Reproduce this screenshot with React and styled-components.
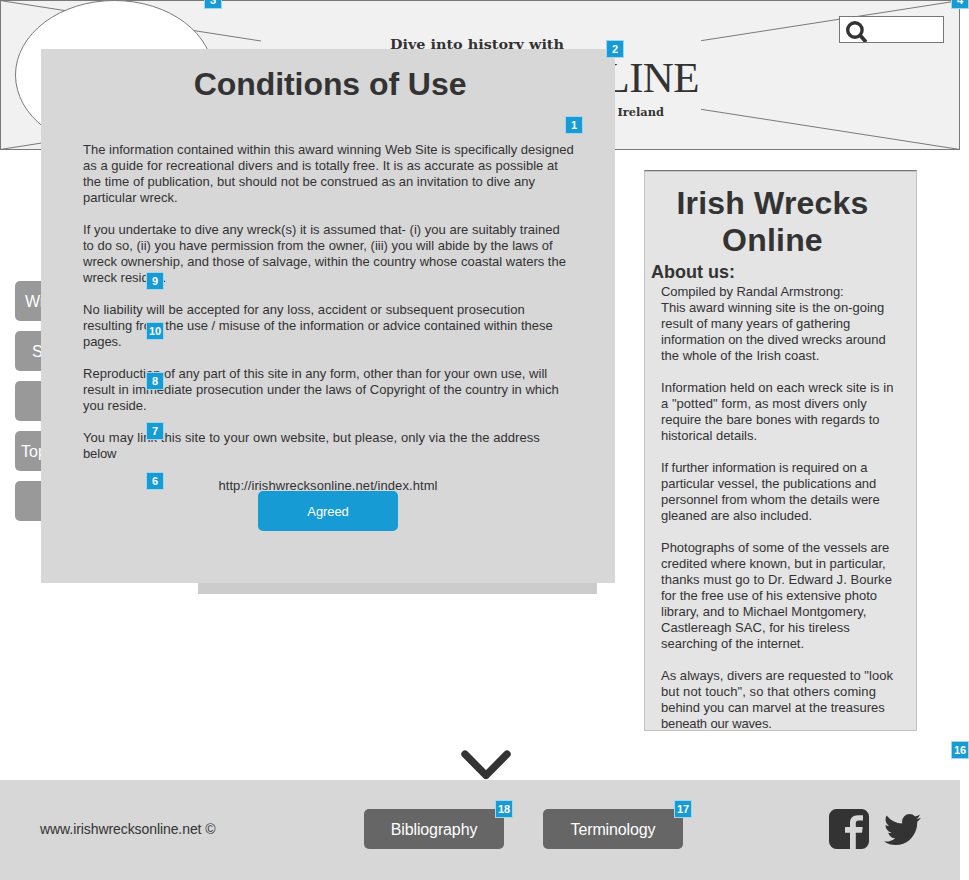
import React from "react";
import styled, { createGlobalStyle } from "styled-components";

const Global = createGlobalStyle`
  * { box-sizing: border-box; }
  body { margin: 0; background: #fff; color: #333; font-family: "Liberation Sans", Arial, sans-serif; font-size: 13px; }
  h1, h2, p { margin: 0; }
`;

const Page = styled.div`
  position: relative;
  width: 969px;
  height: 880px;
  overflow: hidden;
  display: flex;
  flex-direction: column;
`;

const Header = styled.header`
  position: relative;
  width: 960px;
  height: 150px;
  flex: none;
  display: grid;
  grid-template-columns: 261px 440px 1fr;
  background: #f1f1f1;
`;

const Backdrop = styled.svg`
  position: absolute;
  inset: 0;
`;

const Titles = styled.div`
  grid-column: 2;
  position: relative;
  margin: 1px 0;
  padding-top: 35px;
  background: #f1f1f1;
  display: flex;
  flex-direction: column;
  align-items: flex-end;
  white-space: nowrap;
`;

const Tagline = styled.div`
  height: 18px;
  margin-right: ${(p) => p.$right}px;
  font: bold ${(p) => p.$size}px/18px "DejaVu Serif", serif;
  transform: scaleX(${(p) => p.$stretch});
  transform-origin: right;
`;

const Brand = styled.div`
  height: 48px;
  margin: 0 2px 1px 0;
  font: 43px/48px "Liberation Serif", serif;
  letter-spacing: -0.6px;
`;

const Search = styled.div`
  position: relative;
  justify-self: end;
  width: 105px;
  height: 27px;
  margin: 16px 16px 0 0;
  border: 1px solid #777;
  background: #fff;
  overflow: hidden;
`;

const Main = styled.main`
  flex: none;
  height: 630px;
  display: grid;
  grid-template-columns: 644px 273px;
  grid-template-rows: 600px 30px;
`;

const Menu = styled.nav`
  padding: 131px 0 0 15px;
  display: flex;
  flex-direction: column;
  gap: 10px;
`;

const MenuButton = styled.div`
  width: 140px;
  height: 40px;
  padding-left: ${(p) => p.$indent || 0}px;
  border-radius: 5px;
  background: #999;
  color: #fff;
  font-size: 16px;
  line-height: 41px;
`;

const About = styled.aside`
  height: 561px;
  margin-top: 20px;
  padding: 14px 0 0 6px;
  border: 1px solid #c2c2c2;
  border-top-color: #777;
  box-shadow: inset 0 1px 0 #c2c2c2;
  background: #e4e4e4;
  overflow: hidden;
`;

const Title = styled.h1`
  font-size: 32px;
  line-height: 37px;
  text-align: center;
  letter-spacing: ${(p) => p.$track || 0}px;
  padding-right: ${(p) => p.$shift || 0}px;
`;

const Subtitle = styled.h2`
  font-size: 18px;
  line-height: 20px;
  padding-top: 3px;
`;

const Copy = styled.div`
  display: flex;
  flex-direction: column;
  gap: 16px;
  padding-left: ${(p) => p.$indent}px;
  margin-top: ${(p) => p.$top}px;
`;

const Line = styled.div`
  height: 16px;
  line-height: 16px;
  white-space: nowrap;
  letter-spacing: ${(p) => p.$track}px;
`;

const Chevron = styled.svg`
  grid-column: 1;
  margin-left: 461px;
  display: block;
`;

const Footer = styled.footer`
  width: 960px;
  height: 100px;
  flex: none;
  display: flex;
  align-items: center;
  padding: 0 39px 2px 40px;
  background: #d7d7d7;
`;

const Site = styled.div`
  width: 324px;
  font-size: 14px;
  letter-spacing: -0.08px;
`;

const FooterButton = styled.div`
  width: 140px;
  height: 40px;
  margin-right: 39px;
  border-radius: 5px;
  background: #666;
  color: #fff;
  font-size: 16px;
  line-height: 41px;
  letter-spacing: -0.12px;
  text-align: center;
`;

const Social = styled.div`
  margin-left: auto;
  display: flex;
  align-items: center;
  gap: 15px;
`;

const Shade = styled.div`
  position: absolute;
  left: 198px;
  top: 560px;
  width: 399px;
  height: 34px;
  background: #ccc;
`;

const Dialog = styled.section`
  position: absolute;
  left: 41px;
  top: 49px;
  width: 574px;
  height: 534px;
  padding-top: 17px;
  background: #d7d7d7;
`;

const Heading = styled.div`
  padding-left: 4px;
`;

const Address = styled.div`
  margin-top: 16px;
  line-height: 16px;
  letter-spacing: 0.08px;
  text-align: center;
`;

const Agree = styled.div`
  width: 140px;
  height: 40px;
  margin: -3px auto 0 217px;
  border-radius: 5px;
  background: #169bd5;
  color: #fff;
  line-height: 41px;
  letter-spacing: -0.1px;
  text-align: center;
`;

const Badge = styled.div`
  position: absolute;
  left: ${(p) => p.$x}px;
  top: ${(p) => p.$y}px;
  width: 18px;
  height: 18px;
  border: 1px solid #a1d7ee;
  background: #169bd5;
  color: #fff;
  font-size: 11px;
  font-weight: bold;
  line-height: 17px;
  text-align: center;
`;

// Each line is its text and, where needed, a letter-spacing correction.
const terms = [
  [["The information contained within this award winning Web Site is specifically designed", 0.012], ["as a guide for recreational divers and is totally free. It is as accurate as possible at", 0.035], ["the time of publication, but should not be construed as an invitation to dive any", 0.012], ["particular wreck."]],
  [["If you undertake to dive any wreck(s) it is assumed that- (i) you are suitably trained", 0.024], ["to do so, (ii) you have permission from the owner, (iii) you will abide by the laws of"], ["wreck ownership, and those of salvage, within the country whose coastal waters the", 0.012], ["wreck resides."]],
  [["No liability will be accepted for any loss, accident or subsequent prosecution", 0.05], ["resulting from the use / misuse of the information or advice contained within these"], ["pages.", -0.1]],
  [["Reproduction of any part of this site in any form, other than for your own use, will", 0.012], ["result in immediate prosecution under the laws of Copyright of the country in which", 0.012], ["you reside."]],
  [["You may link this site to your own website, but please, only via the the address", 0.072], ["below", -0.15]],
];

const about = [
  [["Compiled by Randal Armstrong:", -0.03], ["This award winning site is the on-going", -0.02], ["result of many years of gathering"], ["information on the dived wrecks around", -0.06], ["the whole of the Irish coast."]],
  [["Information held on each wreck site is in", 0.03], ["a \"potted\" form, as most divers only", 0.04], ["require the bare bones with regards to", -0.03], ["historical details."]],
  [["If further information is required on a", -0.08], ["particular vessel, the publications and", -0.04], ["personnel from whom the details were", -0.03], ["gleaned are also included.", -0.03]],
  [["Photographs of some of the vessels are", -0.02], ["credited where known, but in particular,", -0.02], ["thanks must go to Dr. Edward J. Bourke", 0.05], ["for the free use of his extensive photo", -0.02], ["library, and to Michael Montgomery,", 0.02], ["Castlereagh SAC, for his tireless", 0.03], ["searching of the internet."]],
  [["As always, divers are requested to \"look", 0.03], ["but not touch\", so that others coming", 0.1], ["behind you can marvel at the treasures", -0.03], ["beneath our waves.", -0.15]],
];

const badges = [
  [3, 204, -9], [4, 951, -9], [2, 606, 40], [1, 565, 116], [9, 146, 272], [10, 146, 322],
  [8, 146, 372], [7, 146, 422], [6, 146, 472], [16, 951, 741], [18, 495, 800], [17, 674, 800],
];

const Paragraphs = ({ items }) =>
  items.map((lines, i) => (
    <p key={i}>
      {lines.map(([text, track = 0]) => <Line key={text} $track={track}>{text}</Line>)}
    </p>
  ));

export default function App() {
  return (
    <Page>
      <Global />
      <Header>
        <Backdrop width="960" height="150" fill="none" stroke="#797979">
          <path d="M0.5 0.5H959.5V149.5H0.5ZM0 0.5L960 149.5M0 149.5L960 0.5" />
          <ellipse cx="114.5" cy="75" rx="99" ry="74.5" fill="#fff" />
        </Backdrop>
        <Titles>
          <Tagline $size={12} $right={137} $stretch={1.2}>Dive into history with</Tagline>
          <Brand>ONLINE</Brand>
          <Tagline $size={10.5} $right={37} $stretch={1.08}>Ireland</Tagline>
        </Titles>
        <Search>
          <svg width="40" height="25" viewBox="0 0 40 25" fill="none" stroke="#333">
            <circle cx="14.9" cy="13" r="7.2" strokeWidth="3.4" />
            <path d="M20.3 18.5L26 25" strokeWidth="3.8" />
          </svg>
        </Search>
      </Header>
      <Main>
        <Menu>
          <MenuButton $indent={10}>Wrecks</MenuButton>
          <MenuButton $indent={17}>Search</MenuButton>
          <MenuButton />
          <MenuButton $indent={6}>Top Wrecks</MenuButton>
          <MenuButton />
        </Menu>
        <About>
          <Title $shift={22} $track={0.2}>Irish Wrecks<br />Online</Title>
          <Subtitle>About us:</Subtitle>
          <Copy $indent={10} $top={2}><Paragraphs items={about} /></Copy>
        </About>
        <Chevron width="50" height="30" viewBox="0 0 50 30" fill="none" stroke="#333" strokeWidth="7.4" strokeLinecap="round" strokeLinejoin="round">
          <path d="M4 4.2L25 25.3L46 4.2" />
        </Chevron>
      </Main>
      <Footer>
        <Site>www.irishwrecksonline.net ©</Site>
        <FooterButton>Bibliography</FooterButton>
        <FooterButton>Terminology</FooterButton>
        <Social>
          <svg width="40" height="40" viewBox="0 0 40 40" fill="#333">
            <path d="M7.5 0H32.5A7.5 7.5 0 0 1 40 7.5V32.5A7.5 7.5 0 0 1 32.5 40H26.8V23.8H33L33.7 18H26.8V14.5C26.8 12.5 27.7 11.6 29.7 11.6H34V6.2H29C23.7 6.2 21 9.2 21 13.8V18H16V23.8H21V40H7.5A7.5 7.5 0 0 1 0 32.5V7.5A7.5 7.5 0 0 1 7.5 0Z" />
          </svg>
          <svg width="37" height="31" viewBox="44 256 1576 1280" preserveAspectRatio="none" fill="#333">
            <path d="M1620 408q-67 98-162 167 1 14 1 42 0 130-38 259.5t-115.5 248.5-184.500 210.500-258 146-323 54.500q-271 0-496-145 35 4 78 4 225 0 401-138-105-2-188-64.500t-114-159.500q33 5 61 5 43 0 85-11-112-23-185.500-111.500t-73.500-205.500v-4q68 38 146 41-66-44-105-115t-39-154q0-88 44-163 121 149 294.500 238.500t371.500 99.500q-8-38-8-74 0-134 94.500-228.500t228.500-94.500q140 0 236 102 109-21 205-78-37 115-142 178 93-10 186-50z" />
          </svg>
        </Social>
      </Footer>
      <Shade />
      <Dialog>
        <Heading><Title $track={-0.06}>Conditions of Use</Title></Heading>
        <Copy $indent={42} $top={39}><Paragraphs items={terms} /></Copy>
        <Address>http://irishwrecksonline.net/index.html</Address>
        <Agree>Agreed</Agree>
      </Dialog>
      {badges.map(([n, x, y]) => <Badge key={n} $x={x} $y={y}>{n}</Badge>)}
    </Page>
  );
}
